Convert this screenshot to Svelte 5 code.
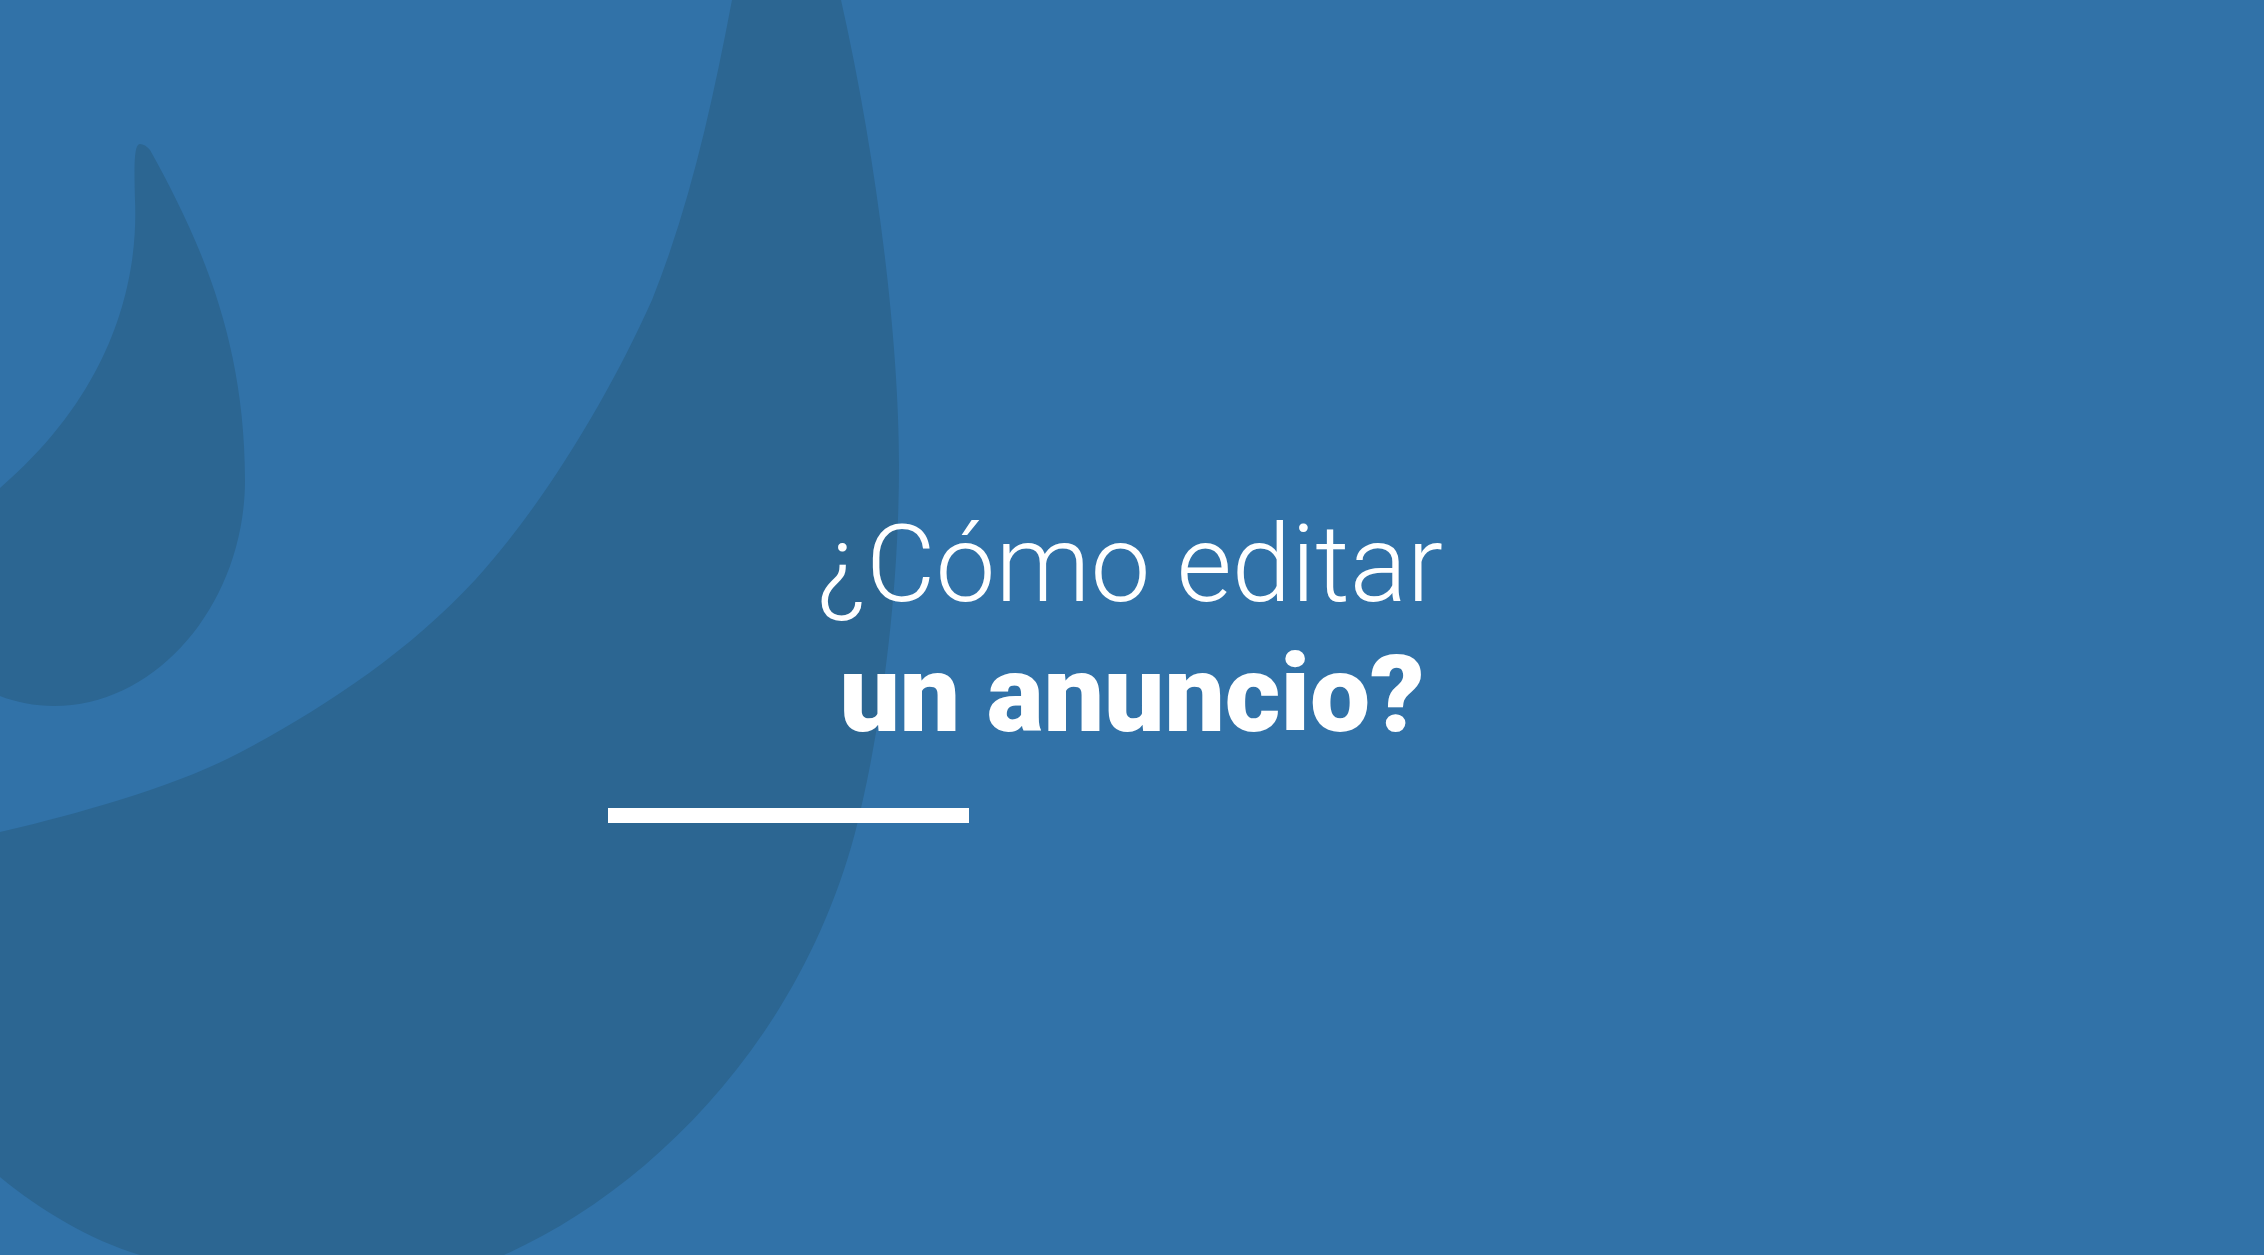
<script>
  let lineOne = '¿Cómo editar'
  let lineTwo = 'un anuncio?'
</script>

<main class="slide">
  <svg class="drops" viewBox="0 0 2264 1255" aria-hidden="true">
    <path d="M732 0C712 105 690 205 652 300C609 396 544 504 476 579C407 654 320 710 241 752C170 790 60 818 0 832V1177C40 1210 90 1240 140 1255H504C650 1190 800 1040 855 833C880 735 899 600 899 464C899 334 875 150 841 0Z" />
    <path d="M140 144C134 144 134 165 135 200C138 270 120 385 0 488V696C15 702 35 706 54 706C160 706 245 600 245 480C245 340 200 240 150 150C147 146 143 144 140 144Z" />
  </svg>

  <h1 class="title">
    <span class="light">{lineOne}</span>
    <span class="bold">{lineTwo}</span>
  </h1>
  <div class="rule"></div>
</main>

<style>
  :global(body) {
    margin: 0;
    background: #3172a8;
  }

  .slide {
    position: relative;
    display: flex;
    flex-direction: column;
    align-items: center;
    box-sizing: border-box;
    width: 2264px;
    height: 1255px;
    padding-top: 500px;
    overflow: hidden;
    background: #3172a8;
    color: #fff;
    font-family: Roboto, "Liberation Sans", sans-serif;
  }

  .drops {
    position: absolute;
    inset: 0;
    width: 100%;
    height: 100%;
    fill: #2c6692;
  }

  .title {
    position: relative;
    display: flex;
    flex-direction: column;
    align-items: center;
    margin: 0;
    font-size: 107px;
    font-weight: 400;
    line-height: 130px;
  }

  .light {
    margin-right: 4px;
    font-weight: 300;
  }

  .bold {
    font-weight: 900;
  }

  .rule {
    position: relative;
    width: 361px;
    height: 15px;
    margin-top: 48px;
    margin-right: 687px;
    background: #fff;
  }
</style>
